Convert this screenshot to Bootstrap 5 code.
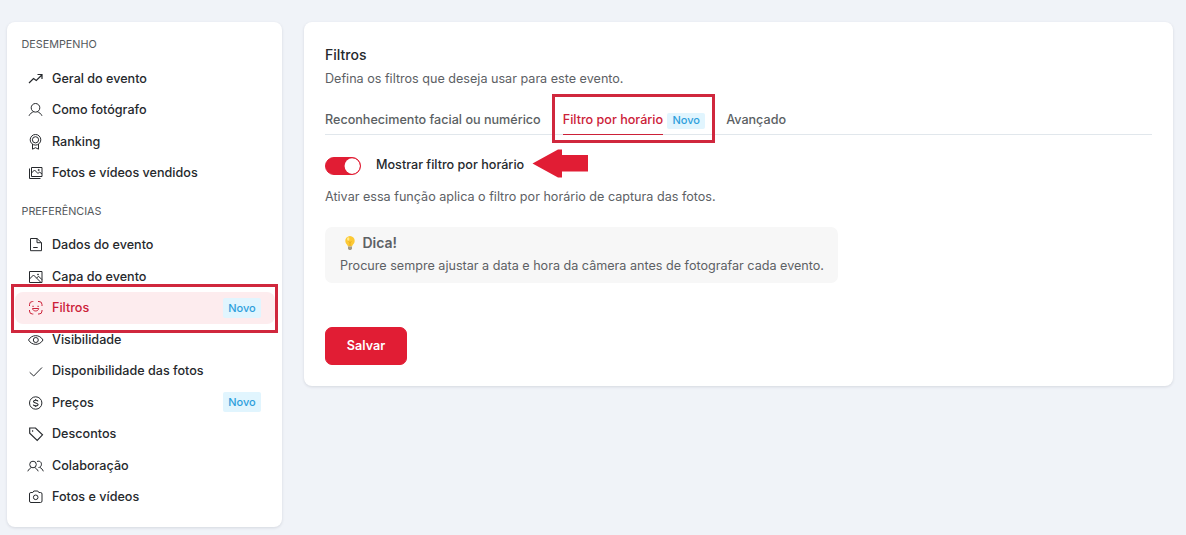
<!DOCTYPE html>
<html lang="pt-BR">
<head>
<meta charset="utf-8">
<meta name="viewport" content="width=device-width, initial-scale=1">
<title>Filtros</title>
<link href="https://cdn.jsdelivr.net/npm/bootstrap@5.3.0/dist/css/bootstrap.min.css" rel="stylesheet">
<style>
  :root { --brand: #e11d34; --line: #e1e7ec; }
  body { font-family: Inter, "Liberation Sans", sans-serif; font-size: 12.6px; line-height: 20px; background: #f0f3f8; color: #26292d; height: 535px; overflow: hidden; }
  .page { padding: 22px 13px 0 7px; gap: 22px; }
  .panel { border: 0; border-radius: 8px; box-shadow: 0 1px 3px rgba(30,40,60,.13); }
  .side { width: 275px; height: 505px; padding: 13px 7.5px 0; }
  .side-title { font-size: 10.8px; color: #54585c; padding-left: 7px; }
  .side-list { margin-top: 8.2px; }
  .side-list + .side-title { margin-top: 12.5px; }
  .side-title + .side-list ~ .side-list { margin-top: 7.7px; }
  .side-link { height: 31.5px; padding: 0 13.5px 0 12.5px; gap: 8px; border-radius: 8px; color: #26292d; font-weight: 500; }
  .side-link svg { width: 17px; height: 17px; fill: none; stroke: currentColor; stroke-width: 1; flex: none; margin-top: -1px; }
  .side-link.active { background: #fdecee; color: #cc2138; }
  .tag-new { background: #e1f5fe; color: #2f9fdc; font-size: 11px; font-weight: 500; line-height: 20px; width: 38px; text-align: center; border-radius: 2px; }
  .side-link .tag-new { margin-top: -1px; }
  .main { height: 364px; padding: 22px 21px 0; }
  .title { font-size: 14px; font-weight: 500; line-height: 22px; margin: 0; }
  .muted { color: #5d6165; }
  .intro { margin-top: 3px; }
  .tabs { height: 26px; margin-top: 20px; border-bottom: 1px solid var(--line); color: #5b5f63; font-weight: 500; line-height: 22px; }
  .tabs .tab-on { color: #cc2138; border-bottom: 1px solid #cc2138; height: 26px; }
  .tabs .tag-new { line-height: 15px; height: 16px; margin: 4px 21px 0 4px; }
  .tab-first { margin-right: 22px; }
  .toggle-row { margin-top: 20px; height: 20px; font-weight: 500; line-height: 19px; }
  .form-switch .form-check-input.toggle { width: 36px; height: 18px; margin: 2px 15px 0 0; float: none; background-color: var(--brand); border-color: var(--brand); box-shadow: none; background-size: 21px 21px; background-position: calc(100% + 2.6px) center; }
  .hint { margin-top: 12px; }
  .tip { width: 513px; height: 56px; border-radius: 7px; background: #f7f7f7; margin-top: 20px; padding: 6px 0 0 15px; color: #5d6165; }
  .tip-title { font-size: 14px; font-weight: 600; gap: 5px; padding-left: 1.5px; }
  .tip-text { margin-top: 3px; }
  .save { width: 82px; height: 38px; margin-top: 44px; padding: 0; font-size: 12.6px; font-weight: 600; border-radius: 7px; --bs-btn-bg: var(--brand); --bs-btn-border-color: var(--brand); }
  .callout-box { position: absolute; border: 3px solid #d0273d; pointer-events: none; }
  .callout-side { left: 11px; top: 284px; width: 267px; height: 49px; }
  .callout-tab { left: 552px; top: 94px; width: 163px; height: 49px; }
  .callout-arrow { position: absolute; left: 532px; top: 148px; }
</style>
<script src="https://cdn.jsdelivr.net/npm/bootstrap@5.3.0/dist/js/bootstrap.bundle.min.js"></script>
</head>
<body>
<div class="page d-flex align-items-start">
  <aside class="panel card side flex-shrink-0">
    <div class="side-title">DESEMPENHO</div>
    <nav class="side-list d-flex flex-column">
      <a class="side-link d-flex align-items-center text-decoration-none" href="#"><svg viewBox="0 0 17 17"><path stroke-width="1.200" d="M2 13 6.500 8.500l2.800 2 5.500-5.500M10.500 4.500h4.500v4.500"/></svg><span>Geral do evento</span></a>
      <a class="side-link d-flex align-items-center text-decoration-none" href="#"><svg viewBox="0 0 17 17"><circle cx="8.500" cy="6.800" r="4.300"/><path d="M2 14.800C3.200 12.500 4.800 11.300 6.700 10.700M15 14.800C13.800 12.500 12.200 11.300 10.300 10.700"/></svg><span>Como fotógrafo</span></a>
      <a class="side-link d-flex align-items-center text-decoration-none" href="#"><svg viewBox="0 0 17 17"><circle cx="8.500" cy="6.800" r="5.300"/><circle cx="8.500" cy="6.800" r="3.100"/><path d="M5.500 11v5.200l3-1.500 3 1.500V11"/></svg><span>Ranking</span></a>
      <a class="side-link d-flex align-items-center text-decoration-none" href="#"><svg viewBox="0 0 17 17"><path d="M4.500 3.500h10.500v9H4.500zM2.500 4.500v10h11M4.500 9l3-3 3.500 3.500L12.500 8 15 10"/><circle cx="11.700" cy="6" r=".6"/></svg><span>Fotos e vídeos vendidos</span></a>
    </nav>
    <div class="side-title">PREFERÊNCIAS</div>
    <nav class="side-list d-flex flex-column">
      <a class="side-link d-flex align-items-center text-decoration-none" href="#"><svg viewBox="0 0 17 17"><path d="M3.500 2.500h6.500l4.500 4.200v8h-11zM10 2.500v4.200h4.500M6.200 11.500h4.500"/></svg><span>Dados do evento</span></a>
      <a class="side-link d-flex align-items-center text-decoration-none" href="#"><svg viewBox="0 0 17 17"><path d="M2.500 3.500h12.500v11H2.500zM2.500 11l4-4 7.500 7.500M9.500 10.200l2-2L15 11.700"/><circle cx="11" cy="6.500" r=".5"/></svg><span>Capa do evento</span></a>
      <a class="side-link active d-flex align-items-center text-decoration-none" href="#"><svg viewBox="0 0 17 17"><path d="M2.500 7V5.500a3 3 0 0 1 3-3h.8M11 2.500h1a3 3 0 0 1 3 3V7M15 11v1a3 3 0 0 1-3 3h-1M6.300 15h-.8a3 3 0 0 1-3-3v-1M5.300 7.300h1.500M10.400 7.300h1.500M5.500 9.500h6.200c-.4 3.300-5.800 3.300-6.200 0z"/></svg><span>Filtros</span><span class="tag-new ms-auto">Novo</span></a>
      <a class="side-link d-flex align-items-center text-decoration-none" href="#"><svg viewBox="0 0 17 17"><path d="M1.500 9C4.800 3.200 12.700 3.200 16 9 12.700 14.800 4.800 14.800 1.500 9z"/><circle cx="8.800" cy="9" r="2.500"/></svg><span>Visibilidade</span></a>
      <a class="side-link d-flex align-items-center text-decoration-none" href="#"><svg viewBox="0 0 17 17"><path d="M2.700 10.300l4 3.700 8.300-8.500"/></svg><span>Disponibilidade das fotos</span></a>
      <a class="side-link d-flex align-items-center text-decoration-none" href="#"><svg viewBox="0 0 17 17"><circle cx="8.700" cy="9" r="6.200"/><path stroke-width="1.100" d="M11 7.300c-.3-1.200-4.400-1.500-4.500.2 0 1.800 4.600 1.200 4.600 3.100 0 1.800-4.500 1.600-4.800 0M8.700 5v1.300M8.700 11.800v1.300"/></svg><span>Preços</span><span class="tag-new ms-auto">Novo</span></a>
      <a class="side-link d-flex align-items-center text-decoration-none" href="#"><svg viewBox="0 0 17 17"><path stroke-width="1.150" d="M2.700 3h5.800l7 6.800-5.300 5.600-7.500-7.200z"/><circle cx="5.700" cy="6" r=".4"/></svg><span>Descontos</span></a>
      <a class="side-link d-flex align-items-center text-decoration-none" href="#"><svg viewBox="0 0 17 17"><circle cx="6" cy="7.500" r="3.300"/><path d="M.8 14.300c.8-1.800 2-2.900 3.600-3.700M11.200 14.300c-.8-1.800-2-2.900-3.600-3.700M10 4.500c2.700-1 4.800.7 4.400 3.300-.2 1.500-1.200 2.600-2.900 2.700M13 10.500c1.500.7 2.600 2 3.300 3.800"/></svg><span>Colaboração</span></a>
      <a class="side-link d-flex align-items-center text-decoration-none" href="#"><svg viewBox="0 0 17 17"><path d="M3.800 4.500h2l1-1.500h4l1 1.500h1.700q1.500 0 1.500 1.500v7q0 1.500-1.500 1.500H4q-1.500 0-1.500-1.500V6q0-1.500 1.300-1.500z"/><circle cx="8.700" cy="9.300" r="2.300"/></svg><span>Fotos e vídeos</span></a>
    </nav>
  </aside>

  <main class="panel card main flex-grow-1">
    <h1 class="title">Filtros</h1>
    <div class="muted intro">Defina os filtros que deseja usar para este evento.</div>
    <div class="tabs d-flex">
      <div class="tab-first">Reconhecimento facial ou numérico</div>
      <div class="tab-on">Filtro por horário</div>
      <span class="tag-new">Novo</span>
      <div>Avançado</div>
    </div>
    <div class="toggle-row form-switch d-flex align-items-start p-0">
      <input class="form-check-input toggle" type="checkbox" role="switch" id="byTime" checked>
      <label for="byTime">Mostrar filtro por horário</label>
    </div>
    <div class="muted hint">Ativar essa função aplica o filtro por horário de captura das fotos.</div>
    <div class="tip">
      <div class="tip-title d-flex align-items-center">
        <svg width="16" height="16" viewBox="0 0 16 16"><path d="M8 1a4.800 4.800 0 0 0-4.700 5c0 2.600 2.200 3.300 2.600 5.500h4.200c.4-2.200 2.600-2.900 2.600-5.500A4.800 4.800 0 0 0 8 1z" fill="#fcc934"/><path d="M6.500 6.500 8 7.500l1.500-1M8 7.500V11" fill="none" stroke="#e8a317" stroke-width=".8"/><ellipse cx="6.200" cy="4" rx="1.200" ry="1.700" fill="#ffe98a"/><path d="M6 11.500h4v2.300L9 15H7l-1-1.200z" fill="#a39a86"/></svg>
        <span>Dica!</span>
      </div>
      <div class="tip-text">Procure sempre ajustar a data e hora da câmera antes de fotografar cada evento.</div>
    </div>
    <button class="btn btn-danger save" type="button">Salvar</button>
  </main>
</div>
<div class="callout-box callout-side"></div>
<div class="callout-box callout-tab"></div>
<svg class="callout-arrow" width="57" height="31" viewBox="0 0 57 31"><path d="M.5 15.500 26 1.500h4V7h26v16.500H30v6h-4z" fill="#e11d34"/></svg>
</body>
</html>
